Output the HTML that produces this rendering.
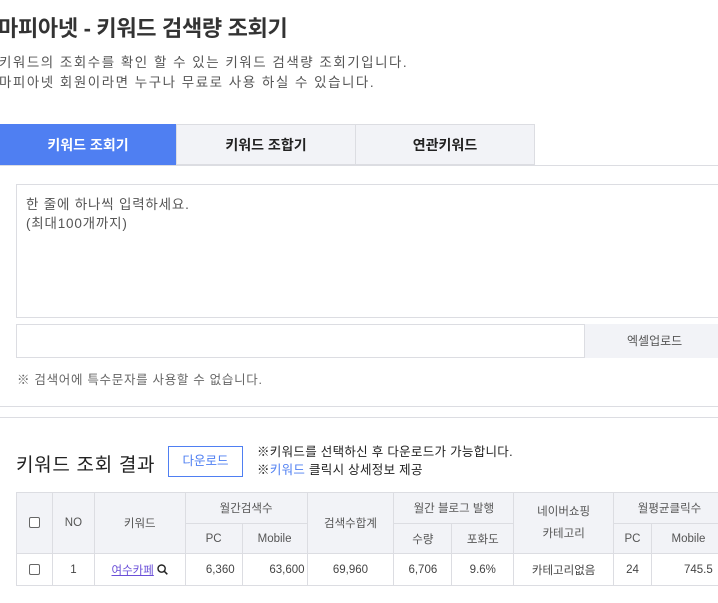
<!DOCTYPE html>
<html><head><meta charset="utf-8"><style>
*{margin:0;padding:0;box-sizing:border-box}
body{width:718px;height:603px;overflow:hidden;background:#fff;font-family:"Liberation Sans","Noto Sans CJK KR",sans-serif;color:#333;position:relative}
.a{position:absolute;white-space:nowrap}
h1{position:absolute;left:-2px;top:11px;font-size:22px;font-weight:bold;color:#333;letter-spacing:-0.3px}
.desc{left:-1px;top:53px;font-size:13.5px;line-height:20px;color:#555;letter-spacing:1.5px}
.tab{position:absolute;top:124px;height:41px;line-height:41px;text-align:center;font-size:14px;font-weight:bold;background:#f2f3f7;border:1px solid #dcdde2;color:#222}
table{position:absolute;left:16px;top:492px;border-collapse:collapse;font-size:11.5px;color:#444;width:710px}
td,th{border:1px solid #dcdde2;text-align:center;font-weight:normal;padding:0}
th{background:#f2f3f7;color:#555}
.cb{display:inline-block;width:11px;height:11px;border:1px solid #666;border-radius:2px;background:#fff;vertical-align:middle}
</style></head><body>
<h1>마피아넷 - 키워드 검색량 조회기</h1>
<div class="a desc">키워드의 조회수를 확인 할 수 있는 키워드 검색량 조회기입니다.<br>마피아넷 회원이라면 누구나 무료로 사용 하실 수 있습니다.</div>
<div class="a" style="left:0;top:165px;width:718px;border-top:1px solid #dcdde2"></div>
<div class="tab" style="left:0;width:176px;background:#4f7ff2;border-color:#4f7ff2;color:#fff">키워드 조회기</div>
<div class="tab" style="left:176px;width:180px">키워드 조합기</div>
<div class="tab" style="left:355px;width:180px">연관키워드</div>
<div class="a" style="left:16px;top:184px;width:710px;height:134px;border:1px solid #dcdde2;padding:10px 9px;font-size:13.5px;line-height:19px;color:#555;white-space:normal;letter-spacing:0.8px">한 줄에 하나씩 입력하세요.<br>(최대100개까지)</div>
<div class="a" style="left:16px;top:324px;width:710px;height:34px;border:1px solid #dcdde2"></div>
<div class="a" style="left:584px;top:324px;width:140px;height:34px;background:#f2f3f7;border-left:1px solid #dcdde2;font-size:12px;line-height:34px;padding-left:42px;color:#555">엑셀업로드</div>
<div class="a" style="left:17px;top:369px;font-size:12.5px;color:#666;letter-spacing:0.7px">※ 검색어에 특수문자를 사용할 수 없습니다.</div>
<div class="a" style="left:0;top:406px;width:718px;border-top:1px solid #dcdde2"></div>
<div class="a" style="left:0;top:417px;width:718px;border-top:1px solid #dcdde2"></div>
<div class="a" style="left:16px;top:450px;font-size:19px;color:#222;letter-spacing:0.7px">키워드 조회 결과</div>
<div class="a" style="left:168px;top:446px;width:75px;height:31px;border:1px solid #4f7ff2;color:#4f7ff2;font-size:12.5px;line-height:29px;text-align:center">다운로드</div>
<div class="a" style="left:257px;top:443px;font-size:12.5px;line-height:18px;color:#222;letter-spacing:0.3px">※키워드를 선택하신 후 다운로드가 가능합니다.<br>※<span style="color:#4f7ff2">키워드</span> 클릭시 상세정보 제공</div>
<table>
<colgroup><col style="width:36px"><col style="width:42px"><col style="width:91px"><col style="width:57px"><col style="width:65px"><col style="width:87px"><col style="width:58px"><col style="width:62px"><col style="width:100px"><col style="width:38px"><col style="width:74px"></colgroup>
<tr style="height:31px"><th rowspan="2"><span class="cb"></span></th><th rowspan="2">NO</th><th rowspan="2">키워드</th><th colspan="2">월간검색수</th><th rowspan="2">검색수합계</th><th colspan="2">월간 블로그 발행</th><th rowspan="2" style="line-height:22px">네이버쇼핑<br>카테고리</th><th colspan="2">월평균클릭수</th></tr>
<tr style="height:30px"><th>PC</th><th>Mobile</th><th>수량</th><th>포화도</th><th>PC</th><th>Mobile</th></tr>
<tr style="height:32px"><td><span class="cb"></span></td><td>1</td><td><span style="color:#6a4fd8;text-decoration:underline">여수카페</span> <svg width="11" height="11" viewBox="0 0 11 11" style="vertical-align:-1px"><circle cx="4.6" cy="4.6" r="3.6" fill="none" stroke="#222" stroke-width="1.4"/><path d="M7.2 7.2L10.3 10.3" stroke="#222" stroke-width="1.5"/></svg></td><td style="text-align:right;padding-right:7px">6,360</td><td style="text-align:right;padding-right:2px">63,600</td><td>69,960</td><td>6,706</td><td>9.6%</td><td>카테고리없음</td><td>24</td><td style="text-align:left;padding-left:32px">745.5</td></tr>
</table>
</body></html>
